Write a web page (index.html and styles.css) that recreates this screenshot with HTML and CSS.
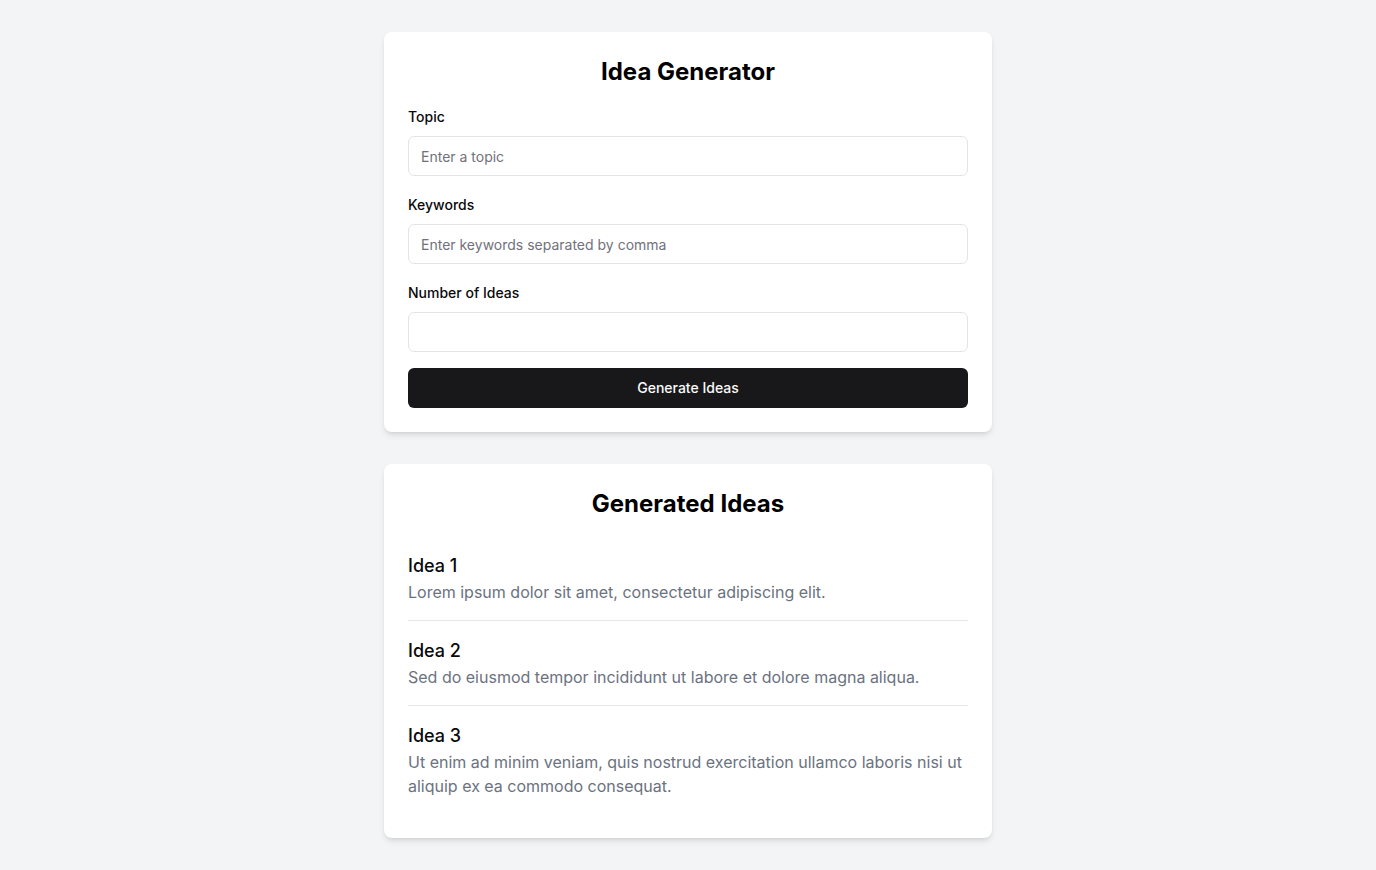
FILE: index.html
```html
<!DOCTYPE html>
<html lang="en">
<head>
<meta charset="utf-8">
<title>Idea Generator</title>
<link rel="stylesheet" href="styles.css">
</head>
<body>
<main class="page">
  <section class="card">
    <h1 class="card-title">Idea Generator</h1>
    <form class="form">
      <div class="field">
        <label class="label" for="topic">Topic</label>
        <input class="input" id="topic" type="text" placeholder="Enter a topic">
      </div>
      <div class="field">
        <label class="label" for="keywords">Keywords</label>
        <input class="input" id="keywords" type="text" placeholder="Enter keywords separated by comma">
      </div>
      <div class="field">
        <label class="label" for="count">Number of Ideas</label>
        <input class="input" id="count" type="number">
      </div>
      <button class="button" type="button">Generate Ideas</button>
    </form>
  </section>
  <section class="card">
    <h2 class="card-title">Generated Ideas</h2>
    <ul class="ideas">
      <li class="idea">
        <h3 class="idea-title">Idea 1</h3>
        <p class="idea-text">Lorem ipsum dolor sit amet, consectetur adipiscing elit.</p>
      </li>
      <li class="idea">
        <h3 class="idea-title">Idea 2</h3>
        <p class="idea-text">Sed do eiusmod tempor incididunt ut labore et dolore magna aliqua.</p>
      </li>
      <li class="idea">
        <h3 class="idea-title">Idea 3</h3>
        <p class="idea-text">Ut enim ad minim veniam, quis nostrud exercitation ullamco laboris nisi ut aliquip ex ea commodo consequat.</p>
      </li>
    </ul>
  </section>
</main>
</body>
</html>
```
FILE: styles.css
```css
* { box-sizing: border-box; }
html, body { margin: 0; padding: 0; }
body {
  background: #f3f4f6;
  font-family: Inter, "Noto Sans", sans-serif;
  color: #09090b;
}
.page {
  width: 608px;
  margin: 0 auto;
  padding: 32px 0;
  display: flex;
  flex-direction: column;
  gap: 32px;
}
.card {
  background: #fff;
  border-radius: 8px;
  padding: 24px;
  box-shadow: 0 4px 6px -1px rgba(0,0,0,0.1), 0 2px 4px -2px rgba(0,0,0,0.1);
}
.card-title {
  margin: 0;
  font-size: 24px;
  line-height: 32px;
  font-weight: 700;
  text-align: center;
  color: #000;
}
.form {
  display: flex;
  flex-direction: column;
  margin-top: 19px;
}
.field {
  display: flex;
  flex-direction: column;
  gap: 9px;
  margin-bottom: 19px;
}
.field:nth-child(3) { margin-bottom: 16px; }
.label {
  font-size: 14px;
  line-height: 20px;
  font-weight: 500;
  color: #09090b;
}
.input {
  height: 40px;
  width: 100%;
  border: 1px solid #e4e4e7;
  border-radius: 6px;
  padding: 0 12px;
  font-family: inherit;
  font-size: 14px;
  color: #09090b;
  background: #fff;
  outline: none;
}
.input::placeholder { color: #71717a; }
.input[type=number]::-webkit-inner-spin-button,
.input[type=number]::-webkit-outer-spin-button { -webkit-appearance: none; margin: 0; }
.button {
  height: 40px;
  width: 100%;
  border: 0;
  border-radius: 6px;
  background: #18181b;
  color: #fafafa;
  font-family: inherit;
  font-size: 14px;
  line-height: 20px;
  font-weight: 500;
  padding: 0 0 1px;
  cursor: pointer;
}
.ideas {
  list-style: none;
  margin: 16px 0 0;
  padding: 0;
}
.idea {
  padding: 16px 0;
  border-bottom: 1px solid #e5e7eb;
}
.idea:last-child { border-bottom: 0; padding-bottom: 16px; }
.idea-title {
  margin: 0;
  font-size: 18px;
  line-height: 28px;
  font-weight: 500;
  color: #09090b;
}
.idea-text {
  margin: 0;
  font-size: 16px;
  line-height: 24px;
  color: #6b7280;
}
```
